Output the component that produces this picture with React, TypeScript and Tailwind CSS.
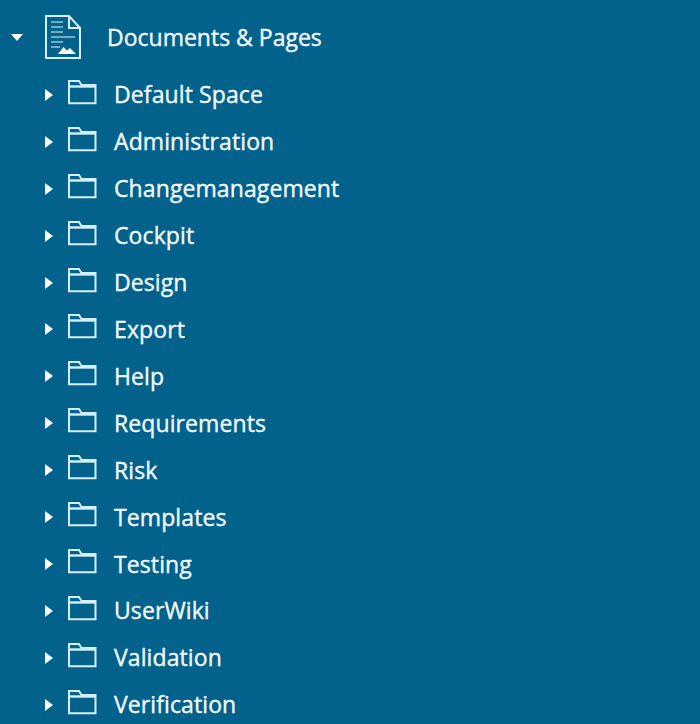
const folders = [
  "Default Space",
  "Administration",
  "Changemanagement",
  "Cockpit",
  "Design",
  "Export",
  "Help",
  "Requirements",
  "Risk",
  "Templates",
  "Testing",
  "UserWiki",
  "Validation",
  "Verification",
];

const FolderIcon = () => (
  <svg width="30" height="26" viewBox="0 0 30 26" fill="none" stroke="#d5f0f7" strokeWidth="2" className="shrink-0">
    <path d="M2 24.200V2h10l2.500 4H28.500v18.200z" />
    <path d="M2 7.500h26.500" strokeWidth="2.400" />
  </svg>
);

const DocIcon = () => (
  <svg width="38" height="46" viewBox="0 0 38 46" fill="none" stroke="#d5f0f7" strokeWidth="2" className="shrink-0">
    <path d="M2 2h23l11 12v30H2z" />
    <path d="M25 2v12h11" />
    <path d="M7 8h12M7 13h12M7 18h12M7 23h24M7 28h12M7 33h9" strokeWidth="1.500" opacity="0.7" />
    <path d="M14 40l5.500-7 3.500 3.500 3-2.500 6 6z" fill="#ffffff" stroke="none" />
  </svg>
);

const App = () => {
  return (
    <div className="w-[700px] h-[724px] overflow-hidden bg-[#03628c] text-[#f4fbfd] font-['Open_Sans','Noto_Sans',sans-serif] [-webkit-text-stroke:0.35px_#f4fbfd]">
      {/* Root node */}
      <div className="flex items-center h-[46px] mt-[14px] pl-[11px]">
        <span className="w-0 h-0 border-x-[6px] border-x-transparent border-t-[7px] border-t-white" />
        <div className="ml-[21px]"><DocIcon /></div>
        <span className="ml-[25px] text-[23px] leading-none whitespace-nowrap">Documents &amp; Pages</span>
      </div>

      {/* Folder rows */}
      <div className="flex flex-col mt-[11.5px]">
        {folders.map((name) => (
          <div key={name} className="flex items-center h-[46.92px] pl-[45px]">
            <span className="w-0 h-0 border-y-[6px] border-y-transparent border-l-[8px] border-l-white" />
            <div className="ml-[14px] -mt-[6px]"><FolderIcon /></div>
            <span className="ml-[17px] text-[23px] leading-none tracking-[0.1px] whitespace-nowrap">{name}</span>
          </div>
        ))}
      </div>
    </div>
  );
};

export default App;
